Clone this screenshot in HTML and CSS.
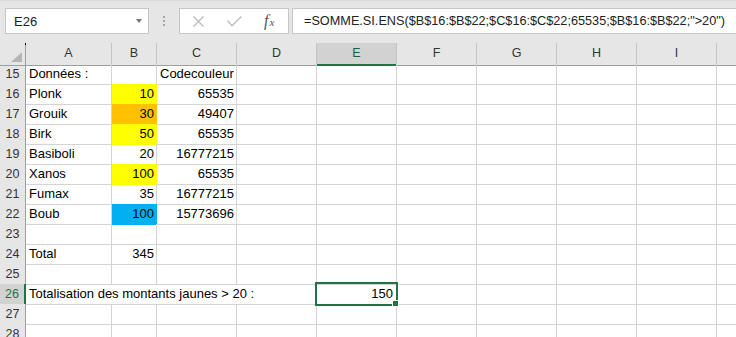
FILE: index.html
```html
<!DOCTYPE html>
<html lang="fr">
<head>
    <meta charset="UTF-8">
    <title>Classeur</title>
    <link rel="stylesheet" href="styles.css">
</head>
<body>
    <div class="formula-bar">
        <div class="name-box">E26<span class="arrow"></span></div>
        <div class="grip"><span></span><span></span><span></span></div>
        <div class="fx-box">
            <svg class="cancel" width="11" height="11" viewBox="0 0 11 11"><path d="M0.5 0.5L10.5 10.5M10.5 0.5L0.5 10.5"/></svg>
            <svg class="enter" width="15" height="11" viewBox="0 0 15 11"><path d="M0.5 4.5L5 9.8L14.5 0.5"/></svg>
            <span class="fx"><i>f</i><i class="x">x</i></span>
        </div>
        <div class="formula">=SOMME.SI.ENS($B$16:$B$22;$C$16:$C$22;65535;$B$16:$B$22;"&gt;20")</div>
    </div>

    <div class="sheet">
        <div class="row head">
            <div class="corner"></div>
            <div>A</div><div>B</div><div>C</div><div>D</div>
            <div class="sel">E</div><div>F</div><div>G</div><div>H</div><div>I</div><div></div>
        </div>
        <div class="row">
            <div class="rh">15</div>
            <div>Données :</div><div></div><div>Codecouleur</div><div></div>
            <div></div><div></div><div></div><div></div><div></div><div></div>
        </div>
        <div class="row">
            <div class="rh">16</div>
            <div>Plonk</div><div class="num yellow">10</div><div class="num">65535</div><div></div>
            <div></div><div></div><div></div><div></div><div></div><div></div>
        </div>
        <div class="row">
            <div class="rh">17</div>
            <div>Grouik</div><div class="num orange">30</div><div class="num">49407</div><div></div>
            <div></div><div></div><div></div><div></div><div></div><div></div>
        </div>
        <div class="row">
            <div class="rh">18</div>
            <div>Birk</div><div class="num yellow">50</div><div class="num">65535</div><div></div>
            <div></div><div></div><div></div><div></div><div></div><div></div>
        </div>
        <div class="row">
            <div class="rh">19</div>
            <div>Basiboli</div><div class="num">20</div><div class="num">16777215</div><div></div>
            <div></div><div></div><div></div><div></div><div></div><div></div>
        </div>
        <div class="row">
            <div class="rh">20</div>
            <div>Xanos</div><div class="num yellow">100</div><div class="num">65535</div><div></div>
            <div></div><div></div><div></div><div></div><div></div><div></div>
        </div>
        <div class="row">
            <div class="rh">21</div>
            <div>Fumax</div><div class="num">35</div><div class="num">16777215</div><div></div>
            <div></div><div></div><div></div><div></div><div></div><div></div>
        </div>
        <div class="row">
            <div class="rh">22</div>
            <div>Boub</div><div class="num blue">100</div><div class="num">15773696</div><div></div>
            <div></div><div></div><div></div><div></div><div></div><div></div>
        </div>
        <div class="row">
            <div class="rh">23</div>
            <div></div><div></div><div></div><div></div>
            <div></div><div></div><div></div><div></div><div></div><div></div>
        </div>
        <div class="row">
            <div class="rh">24</div>
            <div>Total</div><div class="num">345</div><div></div><div></div>
            <div></div><div></div><div></div><div></div><div></div><div></div>
        </div>
        <div class="row">
            <div class="rh">25</div>
            <div></div><div></div><div></div><div></div>
            <div></div><div></div><div></div><div></div><div></div><div></div>
        </div>
        <div class="row">
            <div class="rh sel">26</div>
            <div class="wide">Totalisation des montants jaunes &gt; 20 :</div>
            <div class="num active">150</div><div></div><div></div><div></div><div></div><div></div>
        </div>
        <div class="row">
            <div class="rh">27</div>
            <div></div><div></div><div></div><div></div>
            <div></div><div></div><div></div><div></div><div></div><div></div>
        </div>
        <div class="row">
            <div class="rh">28</div>
            <div></div><div></div><div></div><div></div>
            <div></div><div></div><div></div><div></div><div></div><div></div>
        </div>
    </div>
</body>
</html>
```

FILE: styles.css
```css
body {
    margin: 0;
    overflow: hidden;
    background: #fff;
    font-family: "Liberation Sans", Arial, sans-serif;
    color: #000;
}

/* barre de formule */
.formula-bar {
    height: 43px;
    box-sizing: border-box;
    background: #e6e6e6;
    border-top: 1px solid #d9d9d9;
    padding-top: 7px;
    display: flex;
    align-items: flex-start;
}
.name-box, .fx-box, .formula {
    height: 26px;
    box-sizing: border-box;
    background: #fff;
    border: 1px solid #c6c6c6;
    display: flex;
    align-items: center;
}
.name-box {
    width: 144px;
    margin-left: 5px;
    padding-left: 8px;
    font-size: 13px;
    color: #222;
    position: relative;
}
.arrow {
    position: absolute;
    right: 6px;
    top: 10px;
    border-left: 3.5px solid transparent;
    border-right: 3.5px solid transparent;
    border-top: 4px solid #777;
}
.grip {
    width: 30px;
    height: 26px;
    display: flex;
    flex-direction: column;
    align-items: center;
    justify-content: center;
    gap: 2px;
}
.grip span {
    width: 2px;
    height: 2px;
    background: #a6a6a6;
}
.fx-box {
    width: 110px;
}
.fx-box svg {
    fill: none;
    stroke: #bdbdbd;
    stroke-width: 1.4;
}
.cancel { margin-left: 13px; }
.enter { margin-left: 23px; }
.fx {
    margin-left: 22px;
    font-family: "Liberation Serif", serif;
    color: #555;
    font-size: 16px;
}
.fx .x {
    font-size: 11px;
    margin-left: 1px;
}
.formula {
    flex: 1;
    margin-left: 3px;
    margin-right: -10px;
    padding-left: 11px;
    font-size: 12.7px;
    color: #222;
    white-space: nowrap;
}

/* grille */
.row {
    display: grid;
    grid-template-columns: 26px 86px 45px repeat(8, 80px);
    height: 20px;
}
.row > div {
    box-sizing: border-box;
    border-right: 1px solid #d4d4d4;
    border-bottom: 1px solid #d4d4d4;
    padding: 0 3px;
    font-size: 13px;
    line-height: 20px;
    white-space: nowrap;
}
.row.head {
    height: 21px;
}
.row.head > div {
    background: #e6e6e6;
    border-right-color: #c4c4c4;
    border-bottom-color: #9e9e9e;
    text-align: center;
    font-size: 12.5px;
    color: #333;
    line-height: 21px;
}
.row.head > .sel {
    background: #d2d2d2;
    border-bottom: 2px solid #217346;
    color: #1d5e3a;
}
.corner {
    position: relative;
    border-right-color: #9e9e9e !important;
}
.corner::before {
    content: "";
    position: absolute;
    right: 3px;
    bottom: 3px;
    border-left: 11px solid transparent;
    border-bottom: 10px solid #b4b4b4;
}
.corner::after {
    content: "";
    position: absolute;
    right: -1px;
    top: 0;
    width: 1px;
    height: 2px;
    background: #000;
}
.row > .rh {
    background: #e6e6e6;
    border-right-color: #9e9e9e;
    border-bottom-color: #c6c6c6;
    text-align: center;
    padding: 0;
    font-size: 12.5px;
    color: #333;
}
.row > .rh.sel {
    background: #d2d2d2;
    border-right: 2px solid #217346;
    color: #217346;
}
.row > .num {
    text-align: right;
    padding-right: 2px;
}
.row > .wide {
    grid-column: span 4;
}
.row > .yellow { background: #ffff00; border-color: #ffff00; }
.row > .orange { background: #ffc000; border-color: #ffc000; }
.row > .blue { background: #00b0f0; border-color: #00b0f0; }

.active {
    position: relative;
    padding-right: 3px !important;
}
.active::before {
    content: "";
    position: absolute;
    left: -2px;
    top: -2px;
    right: -2px;
    bottom: -2px;
    border: 2px solid #217346;
}
.active::after {
    content: "";
    position: absolute;
    right: -3px;
    bottom: -3px;
    width: 5px;
    height: 5px;
    background: #217346;
    border: 1px solid #fff;
    z-index: 1;
}
```
